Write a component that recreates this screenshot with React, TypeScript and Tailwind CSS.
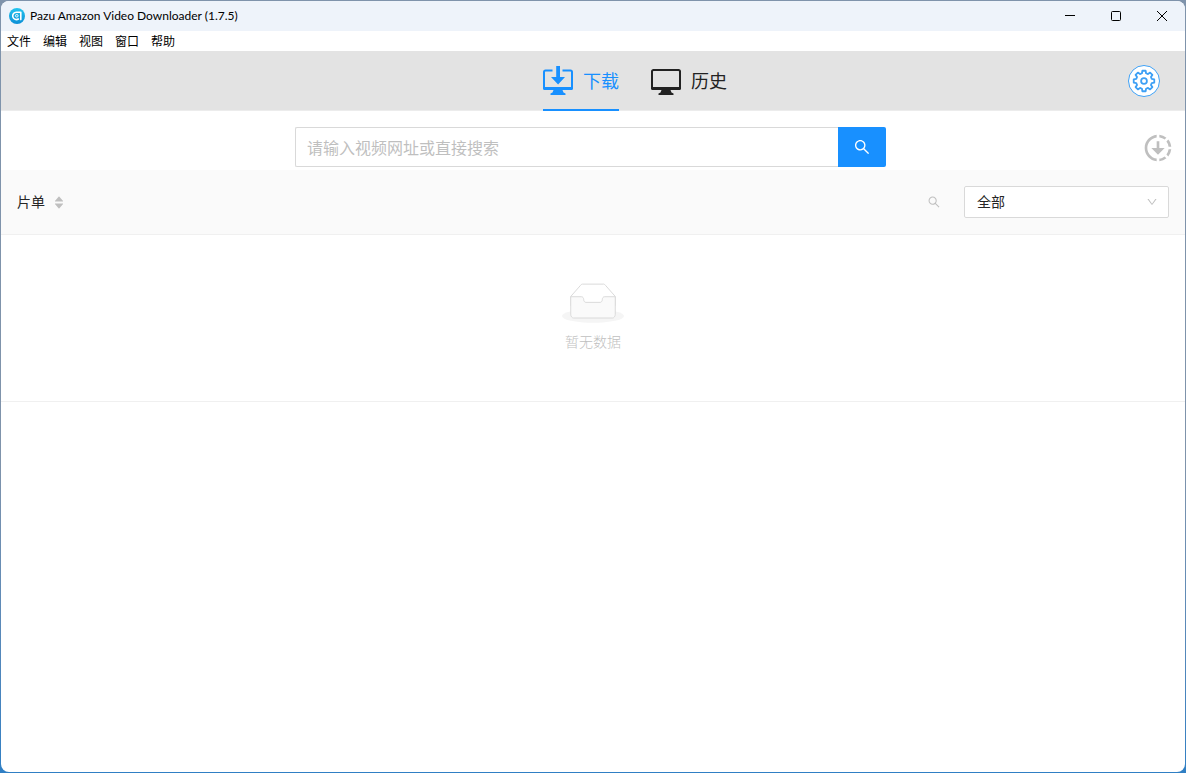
import React from 'react';
import { AiFillCaretDown, AiFillCaretUp, AiOutlineDown, AiOutlineSearch } from 'react-icons/ai';
import { MdDownloading } from 'react-icons/md';

const MENU_ITEMS = ['文件', '编辑', '视图', '窗口', '帮助'];

// Outline of an eight-toothed gear centred on (16, 16)
const GEAR_PATH =
  Array.from({ length: 8 })
    .flatMap((_, i) =>
      [
        [-15, 8],
        [-9, 10.4],
        [9, 10.4],
        [15, 8],
      ].map(([offset, radius]) => {
        const angle = ((i * 45 + offset) * Math.PI) / 180;
        return `${(16 + radius * Math.sin(angle)).toFixed(2)} ${(16 - radius * Math.cos(angle)).toFixed(2)}`;
      }),
    )
    .map((point, i) => (i === 0 ? `M${point}` : `L${point}`))
    .join('') + 'Z';

function AppLogo() {
  return (
    <svg width="16" height="16" viewBox="0 0 16 16" fill="none" aria-hidden="true">
      <defs>
        <linearGradient id="logo" x1="0" y1="0" x2="0" y2="1">
          <stop offset="0" stopColor="#22c4ee" />
          <stop offset="1" stopColor="#0c8fd6" />
        </linearGradient>
      </defs>
      <circle cx="8" cy="8" r="8" fill="url(#logo)" />
      <path
        d="M11.8 11.6V4.2H7.6A3.7 3.7 0 1 0 9.4 11"
        stroke="#fff"
        strokeWidth="1.6"
        strokeLinecap="round"
        strokeLinejoin="round"
      />
      <circle cx="7.8" cy="7.8" r="1.3" stroke="#fff" strokeWidth="0.9" />
    </svg>
  );
}

function DownloadMonitorIcon() {
  return (
    <svg width="30" height="30" viewBox="0 0 30 30" aria-hidden="true">
      <path
        d="M9.5 4.5H2.5A1.5 1.5 0 0 0 1 6v15.5M19.5 4.5h8A1.5 1.5 0 0 1 29 6v15.5"
        fill="none"
        stroke="currentColor"
        strokeWidth="2"
      />
      <path d="M0 21h30v1.5a1.5 1.5 0 0 1-1.5 1.5h-27A1.5 1.5 0 0 1 0 22.5z" fill="currentColor" />
      <path d="M10.5 24h9l1 2.5 2 1V29h-15v-1.5l2-1z" fill="currentColor" />
      <path d="M13.2 0h3.8v11h5L15.1 18.6 8 11h5.2z" fill="currentColor" />
    </svg>
  );
}

function MonitorIcon() {
  return (
    <svg width="30" height="30" viewBox="0 0 30 30" aria-hidden="true">
      <path
        d="M1 22V5.5A1.5 1.5 0 0 1 2.5 4h25A1.5 1.5 0 0 1 29 5.5V22"
        fill="none"
        stroke="currentColor"
        strokeWidth="2"
      />
      <path d="M0 21h30v1.5a1.5 1.5 0 0 1-1.5 1.5h-27A1.5 1.5 0 0 1 0 22.5z" fill="currentColor" />
      <path d="M10.5 24h9l1 2.5 2 1V29h-15v-1.5l2-1z" fill="currentColor" />
    </svg>
  );
}

function GearIcon() {
  return (
    <svg width="32" height="32" viewBox="0 0 32 32" fill="none" stroke="#3ea0f5" aria-hidden="true">
      <circle cx="16" cy="16" r="15.5" fill="#fff" />
      <path d={GEAR_PATH} strokeWidth="1.8" strokeLinejoin="round" />
      <circle cx="16" cy="16" r="2.9" strokeWidth="1.8" />
    </svg>
  );
}

function EmptyIcon() {
  return (
    <svg width="62" height="40" viewBox="0 0 64 41" aria-hidden="true">
      <g transform="translate(0 1)" fill="none" fillRule="evenodd">
        <ellipse fill="#f5f5f5" cx="32" cy="33" rx="32" ry="7" />
        <g fillRule="nonzero" stroke="#d9d9d9">
          <path d="M55 12.76L44.854 1.258C44.367.474 43.656 0 42.907 0H21.093c-.749 0-1.46.474-1.947 1.257L9 12.761V22h46v-9.24z" />
          <path
            d="M41.613 15.931c0-1.605.994-2.93 2.227-2.931H55v18.137C55 33.26 53.68 35 52.05 35h-40.1C10.32 35 9 33.259 9 31.137V13h11.16c1.233 0 2.227 1.323 2.227 2.928v.022c0 1.605 1.005 2.901 2.237 2.901h14.752c1.232 0 2.237-1.308 2.237-2.913v-.007z"
            fill="#fafafa"
          />
        </g>
      </g>
    </svg>
  );
}

function TitleBar() {
  return (
    <header className="flex h-[30px] items-center bg-[#eef3fa] pl-2">
      <AppLogo />
      <h1 className="ml-[5px] flex-1 font-[Lato,'Open_Sans',sans-serif] text-xs text-black">
        Pazu Amazon Video Downloader (1.7.5)
      </h1>
      <button type="button" aria-label="最小化" className="flex h-full w-[46px] items-center justify-center">
        <svg width="10" height="10" viewBox="0 0 10 10" stroke="#000">
          <path d="M0 4.5h10" />
        </svg>
      </button>
      <button type="button" aria-label="最大化" className="flex h-full w-[46px] items-center justify-center">
        <svg width="10" height="10" viewBox="0 0 10 10" fill="none" stroke="#000">
          <rect x="0.5" y="0.5" width="9" height="9" rx="1" />
        </svg>
      </button>
      <button type="button" aria-label="关闭" className="flex h-full w-[46px] items-center justify-center">
        <svg width="10" height="10" viewBox="0 0 10 10" stroke="#000">
          <path d="M0 0l10 10M10 0L0 10" />
        </svg>
      </button>
    </header>
  );
}

function MenuBar() {
  return (
    <nav className="flex h-5 items-center gap-3 bg-white pt-[2px] pl-[6px] text-xs text-black">
      {MENU_ITEMS.map((item) => (
        <button key={item} type="button">
          {item}
        </button>
      ))}
    </nav>
  );
}

function Toolbar() {
  return (
    <div className="grid h-[60px] grid-cols-[1fr_auto_1fr] border-b border-[#ececec] bg-[#e3e3e3]">
      <div />
      <div className="flex gap-8 pl-[84px] text-lg">
        <button
          type="button"
          className="-mb-px flex items-center gap-[10px] border-b-2 border-[#1890ff] pt-[2px] text-[#1890ff]"
        >
          <DownloadMonitorIcon />
          <span className="pt-[2px]">下载</span>
        </button>
        <button
          type="button"
          className="-mb-px flex items-center gap-[10px] border-b-2 border-transparent pt-[2px] text-[#222]"
        >
          <MonitorIcon />
          <span className="pt-[2px]">历史</span>
        </button>
      </div>
      <button type="button" aria-label="设置" className="mr-[25px] self-center justify-self-end">
        <GearIcon />
      </button>
    </div>
  );
}

function SearchBar() {
  return (
    <div className="grid h-[59px] grid-cols-[294fr_591fr_299fr] items-center pt-4 pb-[3px]">
      <div />
      <form className="flex h-10" onSubmit={(e) => e.preventDefault()}>
        <input
          type="text"
          aria-label="视频网址"
          placeholder="请输入视频网址或直接搜索"
          className="min-w-0 flex-1 rounded-l-xs border border-r-0 border-[#d9d9d9] bg-white px-[11px] pt-1 text-base outline-none placeholder:text-[#bfbfbf]"
        />
        <button
          type="submit"
          aria-label="搜索"
          className="flex w-12 items-center justify-center rounded-r-xs bg-[#1890ff] text-white"
        >
          <AiOutlineSearch size={18} />
        </button>
      </form>
      <button type="button" aria-label="下载中" className="mr-[11px] justify-self-end pt-[2px] text-[#bfbfbf]">
        <MdDownloading size={32} />
      </button>
    </div>
  );
}

function MovieTable() {
  return (
    <table className="w-full text-sm">
      <thead>
        <tr className="h-16 border-b border-[#f0f0f0] bg-[#fafafa]">
          <th className="px-4 text-left font-normal text-[#262626]">
            <button type="button" className="flex items-center gap-2">
              片单
              <span className="flex flex-col pt-px text-[#bfbfbf]">
                <AiFillCaretUp size={12} className="-mb-[5px]" />
                <AiFillCaretDown size={12} />
              </span>
            </button>
          </th>
          <th className="px-4 font-normal">
            <div className="flex items-center justify-end">
              <button type="button" aria-label="筛选" className="mr-[23px] text-[#bfbfbf]">
                <AiOutlineSearch size={14} />
              </button>
              <div className="relative flex items-center">
                <select
                  aria-label="状态"
                  className="h-8 w-[205px] appearance-none rounded-xs border border-[#d9d9d9] bg-white pr-8 pl-3 leading-[30px] text-[#262626] outline-none"
                >
                  <option>全部</option>
                </select>
                <AiOutlineDown size={12} className="pointer-events-none absolute right-[11px] text-[#bfbfbf]" />
              </div>
            </div>
          </th>
        </tr>
      </thead>
      <tbody>
        <tr className="border-b border-[#f0f0f0]">
          <td colSpan={2} className="pt-12 pb-12">
            <div className="flex flex-col items-center gap-2 text-[#bfbfbf]">
              <EmptyIcon />
              <p className="leading-[22px] font-light">暂无数据</p>
            </div>
          </td>
        </tr>
      </tbody>
    </table>
  );
}

export default function App() {
  return (
    <div className="flex min-h-screen bg-linear-to-b from-[#7f93ab] from-60% to-[#2f7fc4] p-px font-['Liberation_Sans','Noto_Sans_CJK_SC',sans-serif]">
      <main className="flex-1 overflow-hidden rounded-lg bg-white">
        <TitleBar />
        <MenuBar />
        <Toolbar />
        <SearchBar />
        <MovieTable />
      </main>
    </div>
  );
}
